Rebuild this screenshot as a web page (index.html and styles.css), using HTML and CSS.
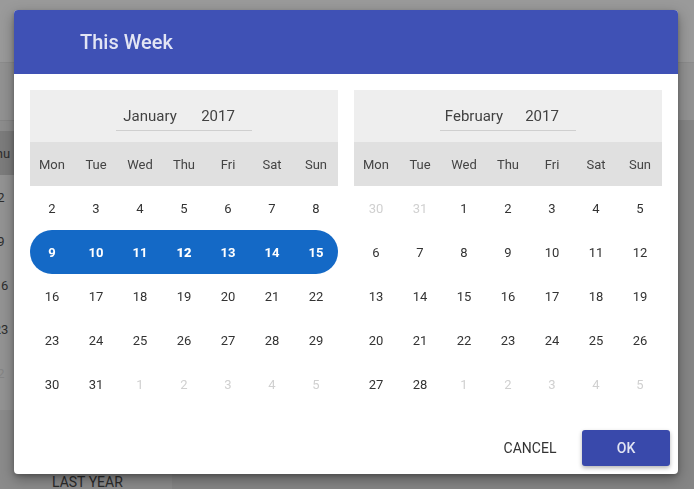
FILE: index.html
```html
<!DOCTYPE html>
<html lang="en">
<head>
    <meta charset="UTF-8">
    <meta name="viewport" content="width=device-width, initial-scale=1.0">
    <title>This Week</title>
    <link rel="stylesheet" href="styles.css">
</head>
<body>

    <!-- Page behind the dialog -->
    <div class="page">
        <div class="topbar"></div>
        <div class="subbar"></div>
        <div class="content">
            <aside class="side">
                <div class="side-cal">
                    <div class="side-gap"></div>
                    <div class="side-head"><span>Thu</span></div>
                    <div class="side-day"><span>2</span></div>
                    <div class="side-day"><span>9</span></div>
                    <div class="side-day"><span>16</span></div>
                    <div class="side-day"><span>23</span></div>
                    <div class="side-day faded"><span>2</span></div>
                </div>
                <div class="side-foot">LAST YEAR</div>
            </aside>
            <main class="main"></main>
        </div>
    </div>

    <!-- Dialog -->
    <div class="dialog">
        <header class="dialog-head">This Week</header>

        <div class="dialog-body">
            <section class="cal">
                <div class="cal-head">
                    <div class="picker">
                        <span class="pick-month">January</span>
                        <span class="pick-year">2017</span>
                    </div>
                </div>
                <div class="cal-week">
                    <span>Mon</span><span>Tue</span><span>Wed</span><span>Thu</span><span>Fri</span><span>Sat</span><span>Sun</span>
                </div>
                <div class="cal-row">
                    <span>2</span><span>3</span><span>4</span><span>5</span><span>6</span><span>7</span><span>8</span>
                </div>
                <div class="cal-row selected">
                    <span>9</span><span>10</span><span>11</span><span class="today">12</span><span>13</span><span>14</span><span>15</span>
                </div>
                <div class="cal-row">
                    <span>16</span><span>17</span><span>18</span><span>19</span><span>20</span><span>21</span><span>22</span>
                </div>
                <div class="cal-row">
                    <span>23</span><span>24</span><span>25</span><span>26</span><span>27</span><span>28</span><span>29</span>
                </div>
                <div class="cal-row">
                    <span>30</span><span>31</span><span class="other">1</span><span class="other">2</span><span class="other">3</span><span class="other">4</span><span class="other">5</span>
                </div>
            </section>

            <section class="cal">
                <div class="cal-head">
                    <div class="picker">
                        <span class="pick-month">February</span>
                        <span class="pick-year">2017</span>
                    </div>
                </div>
                <div class="cal-week">
                    <span>Mon</span><span>Tue</span><span>Wed</span><span>Thu</span><span>Fri</span><span>Sat</span><span>Sun</span>
                </div>
                <div class="cal-row">
                    <span class="other">30</span><span class="other">31</span><span>1</span><span>2</span><span>3</span><span>4</span><span>5</span>
                </div>
                <div class="cal-row">
                    <span>6</span><span>7</span><span>8</span><span>9</span><span>10</span><span>11</span><span>12</span>
                </div>
                <div class="cal-row">
                    <span>13</span><span>14</span><span>15</span><span>16</span><span>17</span><span>18</span><span>19</span>
                </div>
                <div class="cal-row">
                    <span>20</span><span>21</span><span>22</span><span>23</span><span>24</span><span>25</span><span>26</span>
                </div>
                <div class="cal-row">
                    <span>27</span><span>28</span><span class="other">1</span><span class="other">2</span><span class="other">3</span><span class="other">4</span><span class="other">5</span>
                </div>
            </section>
        </div>

        <footer class="dialog-foot">
            <button class="btn btn-flat">CANCEL</button>
            <button class="btn btn-primary">OK</button>
        </footer>
    </div>

</body>
</html>
```

FILE: styles.css
```css
* { box-sizing: border-box; }
html, body { margin: 0; height: 100%; }
body { font-family: Roboto, "Liberation Sans", Arial, sans-serif; background: #939393; overflow: hidden; }

/* page behind (already dimmed) */
.page { display: flex; flex-direction: column; height: 100%; }
.topbar { height: 63px; background: #9a9a9a; border-bottom: 1px solid #8c8c8c; }
.subbar { height: 58px; background: #929292; border-bottom: 1px solid #858585; }
.content { flex: 1; display: flex; }
.side { width: 172px; display: flex; flex-direction: column; }
.side-cal { height: 289px; background: #939393; }
.side-gap { height: 10px; background: #8d8d8d; }
.side-head, .side-day { width: 44px; margin-left: -21px; display: flex; align-items: center; justify-content: center; font-size: 13px; color: #2e2e2e; }
.side-head { height: 44px; width: 100%; margin-left: 0; background: #7c7c7c; justify-content: flex-start; }
.side-head span { margin-left: -12px; }
.side-day { height: 44px; }
.side-day.faded { color: #858585; }
.side-foot { flex: 1; background: #8b8b8b; display: flex; align-items: flex-end; padding: 0 0 0 52px; font-size: 14px; color: #2a2a2a; line-height: 14px; }
.main { flex: 1; background: #858585; }

/* dialog */
.dialog { position: fixed; left: 14px; top: 10px; width: 664px; height: 464px; background: #fff; border-radius: 4px; overflow: hidden; box-shadow: 0 5px 14px rgba(0,0,0,0.35), 0 2px 4px rgba(0,0,0,0.2); display: flex; flex-direction: column; }
.dialog-head { height: 64px; background: #3f51b5; color: rgba(255,255,255,0.85); font-size: 20px; font-weight: 500; padding-left: 66px; display: flex; align-items: center; padding-bottom: 1px; }
.dialog-body { display: flex; gap: 16px; padding: 16px; }
.cal { width: 308px; }
.cal-head { height: 52px; background: #eeeeee; display: flex; justify-content: center; padding-top: 14px; }
.picker { width: 136px; height: 27px; border-bottom: 1px solid #cfcfcf; display: flex; font-size: 15px; color: #424242; }
.pick-month, .pick-year { width: 68px; text-align: center; line-height: 24px; }
.cal-week { height: 44px; background: #e0e0e0; display: grid; grid-template-columns: repeat(7, 1fr); align-items: center; text-align: center; font-size: 13px; color: #444; }
.cal-row { height: 44px; display: grid; grid-template-columns: repeat(7, 1fr); align-items: center; text-align: center; font-size: 13px; color: #333; }
.cal-row .other { color: #d0d0d0; }
.cal-row.selected { background: #1469c6; border-radius: 22px; color: #fff; font-weight: 700; }
.cal-row .today { font-weight: 900; }

.dialog-foot { margin-top: auto; display: flex; justify-content: flex-end; gap: 8px; padding: 8px; }
.btn { width: 88px; height: 36px; border: none; border-radius: 3px; font-family: inherit; font-size: 14px; cursor: pointer; }
.btn-flat { background: transparent; color: #333; }
.btn-primary { background: #3949ab; color: rgba(255,255,255,0.85); font-weight: 500; box-shadow: 0 2px 4px rgba(0,0,0,0.3); }
```
